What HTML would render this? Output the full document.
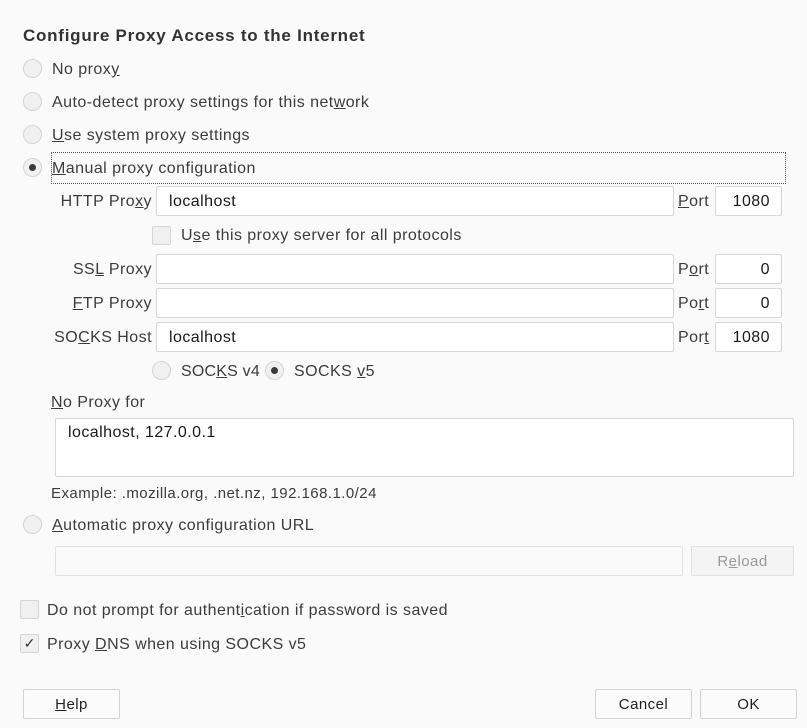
<!DOCTYPE html>
<html><head><meta charset="utf-8"><style>
body{margin:0;width:807px;height:728px;background:#fafafa;font-family:"Liberation Sans",sans-serif;font-size:16px;letter-spacing:0.45px;color:#3c3c3c;position:relative;overflow:hidden}
.a{position:absolute;white-space:nowrap;line-height:20px;margin-top:1px}
.r{position:absolute;width:19px;height:19px;border:1px solid #d4d4d4;border-radius:50%;background:#f0f0f0;box-sizing:border-box}
.r.on::after{content:"";position:absolute;left:5px;top:5px;width:7px;height:7px;border-radius:50%;background:#3a3a3a}
.c{position:absolute;width:19px;height:19px;border:1px solid #d4d4d4;border-radius:2px;background:#f0f0f0;box-sizing:border-box;font-size:14px;line-height:17px;text-align:center;color:#333;letter-spacing:0}
.i{position:absolute;background:#fff;border:1px solid #d6d6d6;border-radius:2px;box-sizing:border-box;color:#1a1a1a;line-height:30px;padding:0 12px}
.dis{background:#fafafa;border-color:#e2e2e2}
.b{position:absolute;border:1px solid #d2d2d2;border-radius:2px;background:#fbfbfb;box-sizing:border-box;text-align:center;line-height:30px;color:#222;font-size:15px}
u{text-decoration:underline}
</style></head><body>
<div class="a" style="left:23px;top:25px;font-weight:bold;font-size:17px;letter-spacing:0.75px;color:#333">Configure Proxy Access to the Internet</div>
<div class="r" style="left:23px;top:59px"></div><div class="a" style="left:52px;top:59px">No prox<u>y</u></div>
<div class="r" style="left:23px;top:92px"></div><div class="a" style="left:52px;top:92px">Auto-detect proxy settings for this net<u>w</u>ork</div>
<div class="r" style="left:23px;top:125px"></div><div class="a" style="left:52px;top:125px"><u>U</u>se system proxy settings</div>
<div class="r on" style="left:23px;top:158px"></div>
<div style="position:absolute;left:51px;top:152px;width:735px;height:32px;border:1px dotted #555;box-sizing:border-box"></div>
<div class="a" style="left:52px;top:158px"><u>M</u>anual proxy configuration</div>

<div class="a" style="right:655px;top:191px">HTTP Pro<u>x</u>y</div>
<div class="i" style="left:156px;top:186px;width:518px;height:30px">localhost</div>
<div class="a" style="left:678px;top:191px"><u>P</u>ort</div>
<div class="i" style="left:715px;top:186px;width:67px;height:30px;text-align:right;padding-right:11px">1080</div>

<div class="c" style="left:152px;top:226px"></div><div class="a" style="left:181px;top:225px">U<u>s</u>e this proxy server for all protocols</div>

<div class="a" style="right:655px;top:259px">SS<u>L</u> Proxy</div>
<div class="i" style="left:156px;top:254px;width:518px;height:30px"></div>
<div class="a" style="left:678px;top:259px">P<u>o</u>rt</div>
<div class="i" style="left:715px;top:254px;width:67px;height:30px;text-align:right;padding-right:11px">0</div>

<div class="a" style="right:655px;top:293px"><u>F</u>TP Proxy</div>
<div class="i" style="left:156px;top:288px;width:518px;height:30px"></div>
<div class="a" style="left:678px;top:293px">Po<u>r</u>t</div>
<div class="i" style="left:715px;top:288px;width:67px;height:30px;text-align:right;padding-right:11px">0</div>

<div class="a" style="right:655px;top:327px">SO<u>C</u>KS Host</div>
<div class="i" style="left:156px;top:322px;width:518px;height:30px">localhost</div>
<div class="a" style="left:678px;top:327px">Por<u>t</u></div>
<div class="i" style="left:715px;top:322px;width:67px;height:30px;text-align:right;padding-right:11px">1080</div>

<div class="r" style="left:152px;top:361px"></div><div class="a" style="left:181px;top:361px;letter-spacing:0.2px">SOC<u>K</u>S v4</div>
<div class="r on" style="left:265px;top:361px"></div><div class="a" style="left:294px;top:361px">SOCKS <u>v</u>5</div>

<div class="a" style="left:51px;top:392px"><u>N</u>o Proxy for</div>
<div class="i" style="left:55px;top:418px;width:739px;height:59px;line-height:28px">localhost, 127.0.0.1</div>
<div class="a" style="left:51px;top:483px;font-size:15px">Example: .mozilla.org, .net.nz, 192.168.1.0/24</div>

<div class="r" style="left:23px;top:515px"></div><div class="a" style="left:52px;top:515px"><u>A</u>utomatic proxy configuration URL</div>
<div class="i dis" style="left:55px;top:546px;width:628px;height:30px"></div>
<div class="b" style="left:691px;top:546px;width:103px;height:30px;color:#999;background:#f4f4f4;border-color:#e0e0e0">R<u>e</u>load</div>

<div class="c" style="left:20px;top:600px"></div><div class="a" style="left:47px;top:600px">Do not prompt for authent<u>i</u>cation if password is saved</div>
<div class="c" style="left:20px;top:634px">✓</div><div class="a" style="left:47px;top:634px">Proxy <u>D</u>NS when using SOCKS v5</div>

<div class="b" style="left:23px;top:689px;width:97px;height:30px"><u>H</u>elp</div>
<div class="b" style="left:595px;top:689px;width:97px;height:30px">Cancel</div>
<div class="b" style="left:700px;top:689px;width:97px;height:30px">OK</div>
</body></html>
